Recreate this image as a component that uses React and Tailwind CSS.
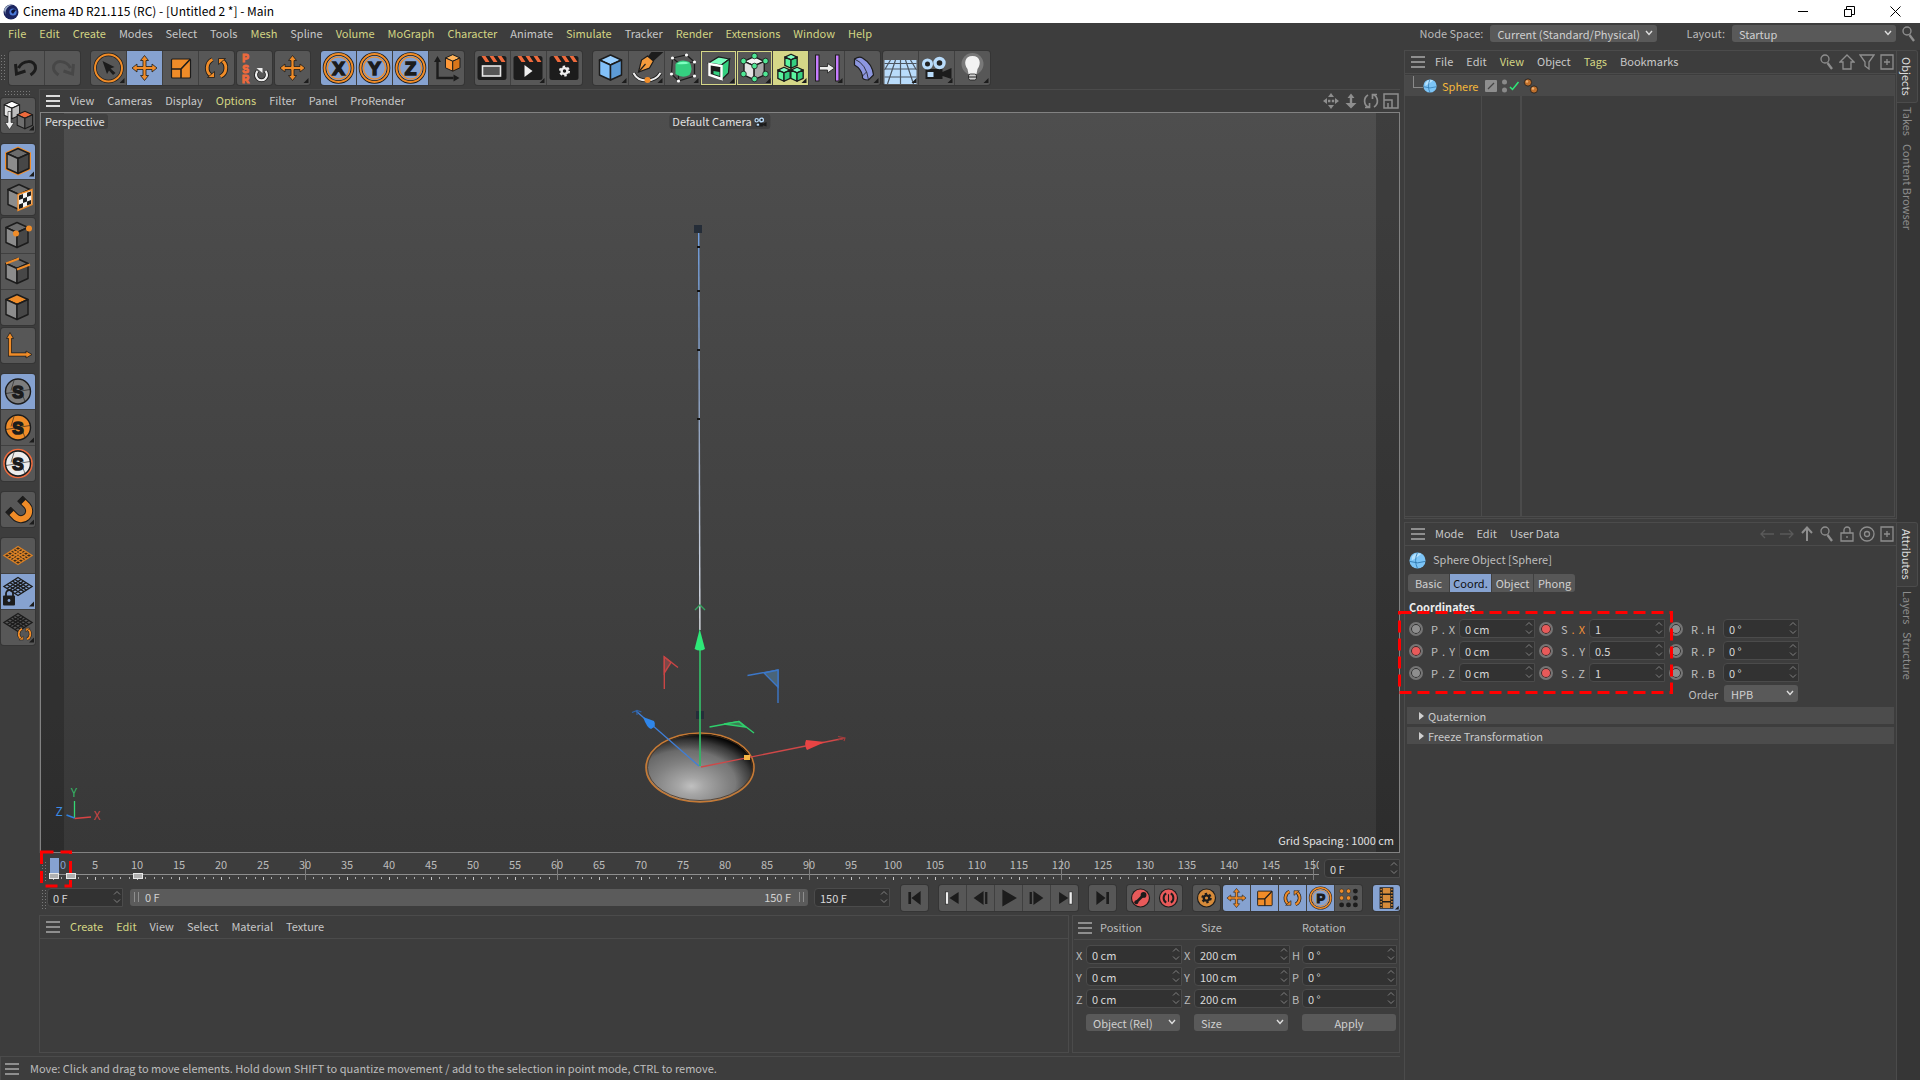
import React from 'react';

const INK = '#1c1c1c';
const ORANGE = '#f08c28';

/* ---------- small drawing helpers ---------- */

function Cube({ top, left, right, stroke = INK, width = 1.5, transform }) {
  return (
    <g transform={transform} stroke={stroke} strokeWidth={width} strokeLinejoin="round">
      <polygon points="17,4 28,9 17,14 6,9" fill={top} />
      <polygon points="6,9 17,14 17,29 6,24" fill={left} />
      <polygon points="28,9 17,14 17,29 28,24" fill={right} />
    </g>
  );
}

function Gear({ cx, cy, color, scale = 1 }) {
  return (
    <g transform={`translate(${cx} ${cy}) scale(${scale})`} fill="none" stroke={color}>
      <circle r="3.4" strokeWidth="2.8" />
      <circle r="5.2" strokeWidth="2.6" strokeDasharray="2.8 2.65" />
    </g>
  );
}

function Corner() {
  return <polygon points="33,27 33,32 28,32" fill={INK} />;
}

function Letter({ x = 17, y = 24, size = 19, weight = 1.6, fill = INK, children }) {
  return (
    <text
      x={x}
      y={y}
      fontSize={size}
      textAnchor="middle"
      fill={fill}
      stroke={fill}
      strokeWidth={weight}
      className="font-['Liberation_Sans',sans-serif] font-bold"
    >
      {children}
    </text>
  );
}

function MoveCross({ color = ORANGE }) {
  return (
    <g stroke={INK} strokeLinejoin="round">
      <path
        d="M17 4.5 L21 9.5 H18.5 V15.5 H24.5 V13 L29.5 17 L24.5 21 V18.5 H18.5 V24.5 H21 L17 29.5 L13 24.5 H15.5 V18.5 H9.5 V21 L4.5 17 L9.5 13 V15.5 H15.5 V9.5 H13 Z"
        fill={color}
        strokeWidth="0.8"
      />
    </g>
  );
}

function ScaleBox() {
  return (
    <g stroke={INK} strokeWidth="1.2">
      <rect x="8" y="8" width="19" height="19" rx="1" fill={ORANGE} />
      <path d="M8 18 H17.5 V27 M17.5 18 L27 8" fill="none" strokeWidth="1.6" />
    </g>
  );
}

function RotateRing({ color = ORANGE, outline = INK }) {
  return (
    <g fill="none">
      <g stroke={outline} strokeWidth="4.6">
        <path d="M12 25 A 9.5 9.5 0 0 1 13 8.5" />
        <path d="M22 9 A 9.5 9.5 0 0 1 21 25.5" />
      </g>
      <g stroke={color} strokeWidth="2.8">
        <path d="M12 25 A 9.5 9.5 0 0 1 13 8.5" />
        <path d="M22 9 A 9.5 9.5 0 0 1 21 25.5" />
      </g>
      <path d="M8 26.5 H15 V20.5 Z M26 7.5 H19 V13.5 Z" fill={color} stroke={outline} strokeWidth="0.8" />
    </g>
  );
}

function AxisRing({ letter }) {
  return (
    <>
      <circle cx="17" cy="17" r="14" fill="none" stroke={INK} strokeWidth="3.6" />
      <circle cx="17" cy="17" r="14" fill="none" stroke={ORANGE} strokeWidth="2" />
      <circle cx="17" cy="17" r="11" fill="none" stroke={ORANGE} strokeWidth="1.2" />
      <Letter>{letter}</Letter>
    </>
  );
}

function Clapper({ children }) {
  return (
    <>
      <rect x="2" y="5" width="29" height="24" rx="2.5" fill={INK} />
      <path d="M6 5 h4 l4 6 h-4 Z M14 5 h4 l4 6 h-4 Z M22 5 h4 l4 6 h-4 Z" fill="#ee6a3c" />
      {children}
    </>
  );
}

function GridPlane({ color }) {
  return (
    <g fill="none" stroke={color} strokeWidth="1.4">
      <path d="M17 6 L31 15 L17 24 L3 15 Z" />
      <path d="M20 8 L6 17 M22.5 9.6 L8.5 18.6 M25 11.2 L11 20.2 M28 13 L14 22" />
      <path d="M14 8 L28 17 M11.5 9.6 L25.5 18.6 M9 11.2 L23 20.2 M6 13 L20 22" />
    </g>
  );
}

function SnapDisc({ fill, ring }) {
  return (
    <>
      {ring && <circle cx="17" cy="17" r="14" fill="none" stroke={ring} strokeWidth="1.6" />}
      <circle cx="17" cy="17" r="12.5" fill={fill} stroke={INK} strokeWidth="1.4" />
      <path d="M5 19 L29 15 M13 6 L10 16 M24 27 L21 19" stroke={INK} strokeWidth="0.6" />
      <Letter y={23} size={17}>S</Letter>
    </>
  );
}

function Movie() {
  return (
    <g>
      <path d="M6 18 H23 V21 L32 17 V28 L23 25 V28 H6 Z" fill={INK} />
      <rect x="8" y="21" width="6" height="5" fill="#b9dcfb" />
      <circle cx="8" cy="13" r="4" fill="#222" stroke="#b9dcfb" strokeWidth="3" />
      <circle cx="20" cy="12" r="4.5" fill="#222" stroke="#b9dcfb" strokeWidth="3.4" />
    </g>
  );
}

const GREY_CUBE = { top: '#6b6b6b', left: '#8c8c8c', right: '#474747' };
const GREEN_CUBE = { top: '#7dffc0', left: '#5cf5a0', right: '#35cf80' };

/* ---------- toolbar contents ---------- */

const mainTools = [
  {
    gap: false,
    items: [
      { label: 'Undo', icon: <path d="M9 17 C13 9 26 8 26 17 C26 20 24 22 21 24 M6 13 L7 23 L16 20" fill="none" stroke={INK} strokeWidth="3" /> },
      { label: 'Redo', icon: <path d="M25 17 C21 9 8 8 8 17 C8 20 10 22 13 24 M28 13 L27 23 L18 20" fill="none" stroke="#474747" strokeWidth="3" /> },
    ],
  },
  {
    gap: true,
    items: [
      {
        label: 'Live Selection',
        icon: (
          <>
            <circle cx="17" cy="17" r="13.5" fill="none" stroke={INK} strokeWidth="3.4" />
            <circle cx="17" cy="17" r="13.5" fill="none" stroke={ORANGE} strokeWidth="2" />
            <path d="M11 10 L23 16 L19 17.5 L24 22 L21.5 24 L17.5 19.5 L15.5 23 Z" fill={INK} />
            <Corner />
          </>
        ),
      },
      { label: 'Move', active: true, icon: <MoveCross /> },
      { label: 'Scale', icon: <ScaleBox /> },
      { label: 'Rotate', icon: <RotateRing /> },
    ],
  },
  {
    gap: false,
    items: [
      {
        label: 'Reset PSR',
        icon: (
          <>
            <Letter x={8} y={11} size={10} weight={1} fill="#ee6a3c">P</Letter>
            <Letter x={8} y={21.5} size={10} weight={1} fill="#ee6a3c">S</Letter>
            <Letter x={8} y={32} size={10} weight={1} fill="#ee6a3c">R</Letter>
            <path d="M20 20 A5.5 5.5 0 1 0 28 20" fill="none" stroke={INK} strokeWidth="3.8" />
            <path d="M20 20 A5.5 5.5 0 1 0 28 20" fill="none" stroke="#eee" strokeWidth="2.2" />
            <path d="M19 17 H25 V22 Z" fill="#eee" />
          </>
        ),
      },
    ],
  },
  { gap: false, items: [{ label: 'Last Tool', icon: <><MoveCross /><Corner /></> }] },
  {
    gap: true,
    items: [
      { label: 'Lock X axis', active: true, icon: <AxisRing letter="X" /> },
      { label: 'Lock Y axis', active: true, icon: <AxisRing letter="Y" /> },
      { label: 'Lock Z axis', active: true, icon: <AxisRing letter="Z" /> },
      {
        label: 'Coordinate System',
        icon: (
          <>
            <path d="M8 10 V27 H24" fill="none" stroke={INK} strokeWidth="2.4" />
            <path d="M8 5 L11.5 11 H4.5 Z M30 27 L24 23.5 V30.5 Z" fill={INK} />
            <Cube transform="translate(12 1) scale(.66)" top="#ffb35a" left="#ff9838" right="#d9751a" />
          </>
        ),
      },
    ],
  },
  {
    gap: true,
    items: [
      { label: 'Render View', icon: <Clapper><rect x="7" y="15" width="18" height="10" fill="#555" stroke="#e8e8e8" strokeWidth="1.6" /></Clapper> },
      { label: 'Render to Picture Viewer', icon: <><Clapper><polygon points="13,14 21,20 13,26" fill="#eee" /></Clapper><Corner /></> },
      { label: 'Render Settings', icon: <Clapper><Gear cx={17} cy={20} color="#eee" scale={0.85} /></Clapper> },
    ],
  },
  {
    gap: true,
    items: [
      { label: 'Cube', icon: <><Cube top="#9ad0ff" left="#82c0f8" right="#5d9bd6" /><Corner /></> },
      {
        label: 'Pen',
        icon: (
          <>
            <path d="M18 6 L22 1 H34 L24 10 Z" fill={INK} />
            <path d="M18 5 L24 10 L20 17 L9 21 L12 9 Z" fill="#f59b3c" stroke={INK} strokeWidth="1.2" />
            <path d="M9 21 L16 13" stroke={INK} strokeWidth="1.2" />
            <path d="M4 22 C9 32 25 32 31 22" fill="none" stroke={INK} strokeWidth="3.6" />
            <path d="M4 22 C9 32 25 32 31 22" fill="none" stroke="#eee" strokeWidth="2" />
            <circle cx="18" cy="29" r="3" fill={ORANGE} />
            <Corner />
          </>
        ),
      },
      {
        label: 'Subdivision Surface',
        icon: (
          <>
            <path d="M7 7 L21 4 L29 11 L29 25 L13 30 L6 23 Z M7 7 L13 12 L29 11 M13 12 V30" fill="none" stroke={INK} strokeWidth="1.2" />
            <path d="M10 13 Q15 7 24 11 Q28 18 24 24 Q17 28 10 23 Z" fill="#35cf80" />
            <path d="M11 13 Q16 9 24 12 Q20 14 11 13 Z" fill="#7dffc0" />
            <g fill="#fff">
              <circle cx="7" cy="7" r="1.6" /><circle cx="21" cy="4" r="1.6" /><circle cx="29" cy="11" r="1.6" />
              <circle cx="29" cy="25" r="1.6" /><circle cx="13" cy="30" r="1.6" /><circle cx="6" cy="23" r="1.6" />
            </g>
            <Corner />
          </>
        ),
      },
      {
        label: 'Extrude',
        outline: true,
        icon: (
          <>
            <polygon points="7,12 17,6 28,8 20,14" fill="#7dffc0" stroke={INK} strokeWidth="1.2" />
            <polygon points="20,14 28,8 27,22 20,29" fill="#35cf80" stroke={INK} strokeWidth="1.2" />
            <polygon points="8,13 20,15 20,28 8,24" fill={INK} stroke="#fff" strokeWidth="2.4" />
            <polygon points="12,20 18,21 18,25 12,23" fill="#35cf80" />
            <Corner />
          </>
        ),
      },
      {
        label: 'Cloner Cage',
        outline: true,
        icon: (
          <>
            <Cube transform="translate(1 2) scale(.92)" top="#f2f2f2" left="#e2e2e2" right="#a8a8a8" />
            <g fill="#4fe895" stroke={INK} strokeWidth="0.8">
              <circle cx="17" cy="5" r="2.8" /><circle cx="6" cy="10" r="2.8" /><circle cx="28" cy="10" r="2.8" />
              <circle cx="17" cy="15" r="2.8" /><circle cx="6" cy="23" r="2.8" /><circle cx="28" cy="23" r="2.8" />
              <circle cx="17" cy="28" r="2.8" />
            </g>
            <Corner />
          </>
        ),
      },
      {
        label: 'Cloner',
        yellow: true,
        icon: (
          <>
            <Cube transform="translate(8 1) scale(.56)" width={2.4} {...GREEN_CUBE} />
            <Cube transform="translate(1 14) scale(.56)" width={2.4} {...GREEN_CUBE} />
            <Cube transform="translate(14 14) scale(.56)" width={2.4} {...GREEN_CUBE} />
            <Corner />
          </>
        ),
      },
      {
        label: 'Linear Field',
        icon: (
          <>
            <rect x="6" y="4" width="3.5" height="26" fill="#c77dff" stroke={INK} />
            <rect x="26" y="4" width="3.5" height="26" fill="#c77dff" stroke={INK} />
            <path d="M10 15.5 H18 V12.5 L25 17 L18 22 V19 H10 Z" fill="#eee" stroke={INK} strokeWidth="0.8" />
            <Corner />
          </>
        ),
      },
      {
        label: 'Bend',
        icon: (
          <>
            <path d="M9 8 Q14 5 17 7 Q27 13 28 24 L23 29 Q16 29 17 25 Q16 18 9 14 Z" fill="#8d97e0" stroke={INK} strokeWidth="1.2" />
            <path d="M9 8 Q21 13 23 29 M17 25 L21 21" fill="none" stroke={INK} strokeWidth="0.8" />
            <Corner />
          </>
        ),
      },
    ],
  },
  {
    gap: false,
    items: [
      {
        label: 'Floor',
        icon: (
          <>
            <rect x="1" y="9" width="32" height="24" fill="#b9dcfb" />
            <path d="M1 12.5 H33 M1 18 H33 M1 26 H33 M17 9 V33 M12 9 L4 33 M22 9 L30 33 M7 9 L1 19 M27 9 L33 19" stroke="#4c5560" strokeWidth="1.2" />
            <Corner />
          </>
        ),
      },
      { label: 'Camera', icon: <><Movie /><Corner /></> },
      {
        label: 'Light',
        icon: (
          <>
            <circle cx="17" cy="13" r="11" fill="#9a9a9a" opacity=".5" />
            <path d="M17 5 C9 5 8 13 12 18 L13 23 H21 L22 18 C26 13 25 5 17 5 Z" fill="#f2f2f2" />
            <rect x="13" y="23" width="8" height="6" rx="2" fill="#cfcfcf" stroke={INK} strokeWidth="0.8" />
            <path d="M13 26 H21" stroke={INK} />
            <Corner />
          </>
        ),
      },
    ],
  },
];

const sideTools = [
  {
    gap: false,
    items: [
      {
        label: 'Make Editable',
        icon: (
          <>
            <Cube transform="translate(-1 0) scale(.7)" top="#fff" left="#e4e4e4" right="#bdbdbd" />
            <Cube transform="translate(12 10) scale(.7)" top="#ee6a3c" left="#6f6f6f" right="#555" />
            <path d="M7 13 H10 V24 H13 L8.5 31 L4 24 H7 Z" fill="#eee" stroke={INK} strokeWidth="0.6" />
            <Corner />
          </>
        ),
      },
    ],
  },
  {
    gap: true,
    items: [
      {
        label: 'Model',
        active: true,
        icon: (
          <>
            <polygon points="17,2 30,8 30,25 17,31 4,25 4,8" fill={ORANGE} />
            <Cube {...GREY_CUBE} />
            <Corner />
          </>
        ),
      },
      {
        label: 'Texture',
        icon: (
          <>
            <Cube transform="translate(1 0)" {...GREY_CUBE} />
            <polygon points="17,14 31,9 31,24 17,30" fill="#f4f4f4" stroke={ORANGE} strokeWidth="1.4" />
            <path d="M18 15 L22 13.6 V18 L18 19.6 Z M26 12.2 L30 10.8 V15 L26 16.6 Z M22 18 L26 16.6 V21 L22 22.6 Z M18 24 L22 22.6 V27 L18 28.4 Z M26 21 L30 19.4 V23.6 L26 25 Z" fill={INK} />
          </>
        ),
      },
    ],
  },
  {
    gap: false,
    items: [
      { label: 'Points', icon: <><Cube transform="translate(-1 0)" {...GREY_CUBE} /><circle cx="15" cy="15" r="3" fill={ORANGE} /><circle cx="28" cy="10" r="3" fill={ORANGE} /></> },
      { label: 'Edges', icon: <><Cube transform="translate(-1 0)" {...GREY_CUBE} /><path d="M5 9 L18 4 M16 15 L29 10" stroke={ORANGE} strokeWidth="2" /></> },
      { label: 'Polygons', icon: <Cube transform="translate(-1 0)" {...GREY_CUBE} top={ORANGE} /> },
    ],
  },
  {
    gap: false,
    items: [
      {
        label: 'Enable Axis',
        icon: (
          <>
            <path d="M9 9 V26 H26" fill="none" stroke={INK} strokeWidth="4" />
            <path d="M9 4 L12.5 10 H5.5 Z M31 26 L25 22.5 V29.5 Z" fill={ORANGE} stroke={INK} strokeWidth="0.8" />
            <path d="M9 9 V26 H26" fill="none" stroke={ORANGE} strokeWidth="2.4" />
          </>
        ),
      },
    ],
  },
  {
    gap: true,
    items: [
      { label: 'Viewport Solo Off', active: true, icon: <SnapDisc fill="#7d7d7d" /> },
      { label: 'Viewport Solo Single', icon: <><SnapDisc fill={ORANGE} /><Corner /></> },
      { label: 'Viewport Solo Selection', icon: <SnapDisc fill="#ececec" ring="#ee6a3c" /> },
    ],
  },
  {
    gap: true,
    items: [
      {
        label: 'Enable Snap',
        icon: (
          <>
            <path d="M7 17 L14 24 A8 8 0 0 0 26 13 L19 6" fill="none" stroke={INK} strokeWidth="8" />
            <path d="M8 18 L14 24 A8 8 0 0 0 26 13 L20 7" fill="none" stroke={ORANGE} strokeWidth="6" />
            <path d="M7 17 L10.5 20.5 M19 6 L22.5 9.5" stroke={INK} strokeWidth="7" />
            <Corner />
          </>
        ),
      },
    ],
  },
  {
    gap: true,
    items: [
      {
        label: 'Workplane',
        icon: (
          <g transform="translate(0 2)">
            <path d="M17 6 L31 15 L17 24 L3 15 Z" fill="#3a2a1a" />
            <GridPlane color="#d98025" />
          </g>
        ),
      },
      {
        label: 'Lock Workplane',
        active: true,
        icon: (
          <>
            <g transform="translate(0 -3)"><GridPlane color={INK} /></g>
            <path d="M5 22 V19 A3.5 3.5 0 0 1 12 19 V22" fill="none" stroke={INK} strokeWidth="1.8" />
            <rect x="2" y="21" width="12" height="10" rx="1" fill={INK} />
            <circle cx="8" cy="26" r="1.4" fill="#86a2d0" />
            <Corner />
          </>
        ),
      },
      {
        label: 'Planar Workplane',
        icon: (
          <>
            <g transform="translate(0 -3)"><GridPlane color={INK} /></g>
            <g transform="translate(13 13) scale(.62)"><RotateRing /></g>
            <Corner />
          </>
        ),
      },
    ],
  },
];

const redDisc = (
  <>
    <circle cx="17" cy="17" r="12.5" fill={INK} />
    <circle cx="17" cy="17" r="11" fill="#e85a5a" />
  </>
);

const transport = [
  { gap: true, items: [{ label: 'Go to Start', icon: <path d="M9 9 H12.5 V25 H9 Z M25 8 V26 L13 17 Z" fill={INK} /> }] },
  {
    gap: true,
    items: [
      { label: 'Previous Key', icon: <><rect x="8" y="9" width="4" height="16" fill="#eee" stroke={INK} strokeWidth="0.8" /><path d="M25 9 V25 L13 17 Z" fill={INK} /></> },
      { label: 'Previous Frame', icon: <path d="M21 8 V26 L8 17 Z M23 9 H26 V25 H23 Z" fill={INK} /> },
      { label: 'Play', icon: <path d="M9 6 L28 17 L9 28 Z" fill={INK} /> },
      { label: 'Next Frame', icon: <path d="M13 8 V26 L26 17 Z M8 9 H11 V25 H8 Z" fill={INK} /> },
      { label: 'Next Key', icon: <><path d="M10 9 V25 L22 17 Z" fill={INK} /><rect x="23" y="9" width="4" height="16" fill="#eee" stroke={INK} strokeWidth="0.8" /></> },
    ],
  },
  { gap: true, items: [{ label: 'Go to End', icon: <path d="M22 9 H25.5 V25 H22 Z M9 8 V26 L21 17 Z" fill={INK} /> }] },
  {
    gap: true,
    items: [
      { label: 'Record', icon: <>{redDisc}<path d="M11 23 L20 14" stroke={INK} strokeWidth="3.4" /><circle cx="21" cy="13" r="3.8" fill={INK} /><circle cx="11.5" cy="22.5" r="2.6" fill={INK} /></> },
      { label: 'Autokeying', icon: <>{redDisc}<path d="M14 11 A7 7 0 0 0 14 23 M20 11 A7 7 0 0 1 20 23" fill="none" stroke={INK} strokeWidth="2.6" /><path d="M17 12 V22" stroke={INK} strokeWidth="1.4" /></> },
    ],
  },
  {
    gap: true,
    items: [
      { label: 'Keyframe Selection', icon: <><circle cx="17" cy="17" r="12.5" fill={INK} /><circle cx="17" cy="17" r="11" fill="#d68b3a" /><Gear cx={17} cy={17} color={INK} scale={1.05} /></> },
    ],
  },
  {
    gap: false,
    items: [
      { label: 'Key Position', active: true, icon: <MoveCross /> },
      { label: 'Key Scale', active: true, icon: <ScaleBox /> },
      { label: 'Key Rotation', active: true, icon: <RotateRing /> },
      {
        label: 'Key Parameter',
        active: true,
        icon: (
          <>
            <circle cx="17" cy="17" r="13.5" fill="none" stroke={INK} strokeWidth="3.4" />
            <circle cx="17" cy="17" r="13.5" fill="none" stroke={ORANGE} strokeWidth="2" />
            <circle cx="17" cy="17" r="10.5" fill="none" stroke={ORANGE} />
            <Letter x={17.5} y={23} size={17}>P</Letter>
          </>
        ),
      },
      {
        label: 'Key Point Level Animation',
        icon: (
          <>
            <g fill={ORANGE} stroke={INK} strokeWidth="0.6">
              <circle cx="8" cy="8" r="2.8" /><circle cx="17" cy="8" r="2.8" /><circle cx="8" cy="17" r="2.8" /><circle cx="17" cy="17" r="2.8" />
            </g>
            <g fill={INK}>
              <circle cx="26" cy="8" r="3.2" /><circle cx="26" cy="17" r="3.2" /><circle cx="8" cy="26" r="3.2" /><circle cx="17" cy="26" r="3.2" /><circle cx="26" cy="26" r="3.2" />
            </g>
          </>
        ),
      },
    ],
  },
  {
    gap: true,
    items: [
      {
        label: 'Timeline',
        active: true,
        icon: (
          <>
            <rect x="8" y="3" width="18" height="28" fill={INK} />
            <path d="M12 4 H22 V11 H12 Z M12 13 H22 V21 H12 Z M12 23 H22 V30 H12 Z" fill="#d68b3a" />
            <path d="M10 5 V30 M24 5 V30" stroke="#d68b3a" strokeWidth="2" strokeDasharray="2 2" />
            <Corner />
          </>
        ),
      },
    ],
  },
];

/* ---------- shared controls ---------- */

function ToolGroup({ items, size, vertical }) {
  return (
    <div
      className={`flex shrink-0 gap-px overflow-hidden rounded-[3px] bg-[#404040] ring-1 ring-[#353535] ${vertical ? 'flex-col' : ''}`}
    >
      {items.map((t) => (
        <button
          key={t.label}
          type="button"
          aria-label={t.label}
          className={`${size} flex shrink-0 items-center justify-center ${
            t.active ? 'bg-[#86a2d0]' : t.yellow ? 'bg-[#d5d788]' : 'bg-[#575757]'
          } ${t.outline ? 'ring-1 ring-inset ring-[#d5d788]' : ''}`}
        >
          <svg viewBox="0 0 34 34" className="h-full w-full">{t.icon}</svg>
        </button>
      ))}
    </div>
  );
}

function Burger({ light }) {
  return (
    <button type="button" aria-label="Menu" className="flex w-3.5 shrink-0 flex-col gap-[3px]">
      {[0, 1, 2].map((i) => (
        <span key={i} className={`block h-0.5 w-full ${light ? 'bg-[#dcdcdc]' : 'bg-[#8e8e8e]'}`} />
      ))}
    </button>
  );
}

function Menu({ items }) {
  return (
    <nav className="flex items-center gap-[13px] pb-0.5">
      {items.map(([label, hot]) => (
        <button key={label} type="button" className={hot ? 'text-[#d3d583]' : 'text-[#c8c8c8]'}>
          {label}
        </button>
      ))}
    </nav>
  );
}

function Field({ label, value, width = 'w-[76px]' }) {
  return (
    <div className={`relative shrink-0 ${width}`}>
      <input
        type="text"
        aria-label={label}
        defaultValue={value}
        className="block h-[19px] w-full rounded-l border border-[#4b4b4b] bg-[#323232] pl-[5px] text-[#d8d8d8] outline-none"
      />
      <svg viewBox="0 0 8 14" className="pointer-events-none absolute top-0.5 right-0.5 h-3.5 w-2" fill="none" stroke="#808080">
        <path d="M1 4.5 L4 1.5 L7 4.5 M1 9.5 L4 12.5 L7 9.5" />
      </svg>
    </div>
  );
}

function Select({ id, label, value, width }) {
  return (
    <div className={`relative shrink-0 ${width}`}>
      <select
        id={id}
        aria-label={label}
        defaultValue={value}
        className="block h-[17px] w-full appearance-none rounded-[3px] bg-[#595959] pl-[7px] text-[#d0d0d0] outline-none"
      >
        <option>{value}</option>
      </select>
      <svg viewBox="0 0 8 6" className="pointer-events-none absolute top-[5px] right-1 h-1.5 w-2" fill="none" stroke="#dedede" strokeWidth="1.4">
        <path d="M1 1 L4 4.5 L7 1" />
      </svg>
    </div>
  );
}

function Grip({ className = '' }) {
  return (
    <div
      className={`shrink-0 bg-[radial-gradient(circle,#7a7a7a_0.7px,transparent_1px)] bg-[size:3px_3px] ${className}`}
    />
  );
}

function SphereIcon({ className }) {
  return (
    <svg viewBox="0 0 18 18" className={className}>
      <circle cx="9" cy="9" r="8.5" fill="#7cc4f6" />
      <path d="M3 5 A8 8 0 0 1 13 2 Q8 6 3 9 Z" fill="#b5e2ff" />
      <path d="M1 10 Q9 13 17 10 M9 0.5 Q5 9 9 17.5" fill="none" stroke="#2c76ae" strokeWidth="0.9" />
    </svg>
  );
}

/* ---------- title and menu bar ---------- */

function TitleBar() {
  return (
    <header className="flex h-[23px] items-center bg-white text-black">
      <svg viewBox="0 0 16 16" className="ml-[3px] h-4 w-4">
        <circle cx="8" cy="8" r="7.5" fill="#1c2560" />
        <path d="M1 6 A7.5 7.5 0 0 1 10 1 A8 8 0 0 0 3 12 Z" fill="#9fb0c8" />
        <circle cx="10" cy="8" r="3.6" fill="#4a78d8" />
        <path d="M8 8 A3 3 0 0 1 13 6 L10 10 Z" fill="#0c1236" />
      </svg>
      <h1 className="ml-1 pb-0.5 text-[12px]">Cinema 4D R21.115 (RC) - [Untitled 2 *] - Main</h1>
      <div className="mr-0.5 ml-auto flex">
        <button type="button" aria-label="Minimize" className="flex w-[46px] justify-center">
          <svg viewBox="0 0 10 10" className="h-2.5 w-2.5" stroke="#000"><path d="M0 5.5 H10" /></svg>
        </button>
        <button type="button" aria-label="Restore" className="flex w-[46px] justify-center">
          <svg viewBox="0 0 11 11" className="h-[11px] w-[11px]" fill="none" stroke="#000">
            <path d="M0.5 3.5 H7.5 V10.5 H0.5 Z M2.5 3 V0.5 H10.5 V8.5 H8" />
          </svg>
        </button>
        <button type="button" aria-label="Close" className="flex w-[46px] justify-center">
          <svg viewBox="0 0 11 11" className="h-[11px] w-[11px]" stroke="#000"><path d="M0.5 0.5 L10.5 10.5 M10.5 0.5 L0.5 10.5" /></svg>
        </button>
      </div>
    </header>
  );
}

const mainMenu = [
  ['File', 1], ['Edit', 1], ['Create', 1], ['Modes', 0], ['Select', 0], ['Tools', 0], ['Mesh', 1], ['Spline', 0],
  ['Volume', 1], ['MoGraph', 1], ['Character', 1], ['Animate', 0], ['Simulate', 1], ['Tracker', 0], ['Render', 1],
  ['Extensions', 1], ['Window', 1], ['Help', 1],
];

function MenuBar() {
  return (
    <div className="flex h-[22px] items-center pb-px pl-2">
      <Menu items={mainMenu} />
      <div className="ml-auto flex items-center">
        <label htmlFor="node-space" className="mr-[7px] pb-0.5 text-[#bababa]">Node Space:</label>
        <Select id="node-space" value="Current (Standard/Physical)" width="w-[167px]" />
        <label htmlFor="layout" className="mr-[7px] ml-[29px] pb-0.5 text-[#bababa]">Layout:</label>
        <Select id="layout" value="Startup" width="w-[164px]" />
        <button type="button" aria-label="Search" className="mr-1 ml-1.5">
          <svg viewBox="0 0 14 16" className="h-4 w-3.5" fill="none" stroke="#8e8e8e">
            <circle cx="5" cy="5" r="4" strokeWidth="1.4" />
            <path d="M7.5 9 L12 15" strokeWidth="2.4" />
          </svg>
        </button>
      </div>
    </div>
  );
}

/* ---------- viewport ---------- */

function Scene() {
  return (
    <svg viewBox="41 113 1358 739" preserveAspectRatio="xMidYMid slice" className="absolute inset-0 h-full w-full">
      <defs>
        <radialGradient id="ball" cx="0.42" cy="0.77" r="0.8">
          <stop offset="0" stopColor="#c0c0c0" />
          <stop offset="0.15" stopColor="#a6a6a6" />
          <stop offset="0.45" stopColor="#808080" />
          <stop offset="1" stopColor="#484848" />
        </radialGradient>
        <radialGradient id="ballShade" cx="0.36" cy="0.72" r="0.72">
          <stop offset="0.65" stopColor="#000" stopOpacity="0" />
          <stop offset="0.85" stopColor="#000" stopOpacity="0.4" />
          <stop offset="1" stopColor="#000" stopOpacity="0.92" />
        </radialGradient>
        <linearGradient id="path" x1="0" y1="0" x2="0" y2="1">
          <stop offset="0" stopColor="#6f9ee0" />
          <stop offset="0.5" stopColor="#93a4bf" />
          <stop offset="1" stopColor="#dfe3ea" />
        </linearGradient>
      </defs>

      {/* animation path with its frame marks */}
      <path d="M698 232 h1.4 L700.6 630 h-1.4 Z" fill="url(#path)" />
      <rect x="694" y="225" width="8" height="8" fill="#252d38" />
      {[247, 291, 350, 419].map((y) => (
        <rect key={y} x="697" y={y - 1} width="3" height="2" fill="#111" />
      ))}

      <ellipse cx="700" cy="767.5" rx="54" ry="34.5" fill="url(#ball)" />
      <ellipse cx="700" cy="767.5" rx="54" ry="34.5" fill="url(#ballShade)" stroke="#c77a34" strokeWidth="1.6" />
      <ellipse cx="700" cy="767.5" rx="52.5" ry="33" fill="none" stroke="#4a3420" strokeWidth="0.8" />

      {/* move gizmo */}
      <path d="M695 610 L700 605 L705 610" fill="none" stroke="#35a35f" strokeWidth="1.4" />
      <rect x="696" y="711" width="8" height="8" fill="#252d38" />
      <path d="M700 648 V766" stroke="#35b566" strokeWidth="1.8" />
      <path d="M699.7 629 L705 649 Q700 652 694.6 649 Z" fill="#2ee878" />
      <path d="M699 766 L636 711" stroke="#3f7fd8" strokeWidth="1.3" />
      <path d="M632 712.5 L637 710.5 L641.5 712 M637 710.5 L637 715" fill="none" stroke="#2f63a8" strokeWidth="1.2" />
      <path d="M643 717 L654 721 Q657 726 651 729 Q647 728 643 717 Z" fill="#2f86ea" />
      <path d="M701 767 L843 738.5" stroke="#cf4848" strokeWidth="1.3" />
      <path d="M838 736.5 L845 738 L844 741 M838 740 L845 738" fill="none" stroke="#a03c3c" strokeWidth="1.2" />
      <path d="M825 742 L806 740 Q804 745 807 750 Z" fill="#e84444" />
      <rect x="744" y="755" width="6" height="5" fill="#f6b545" />

      {/* plane handles */}
      <g fill="none" stroke="#c94545" strokeWidth="1.4">
        <path d="M664.3 689 V657 L678 667.5" />
        <path d="M664.3 657 L671 662.5 L664.3 673 Z" fill="#7a4848" />
      </g>
      <g fill="none" stroke="#3c77c8" strokeWidth="1.4">
        <path d="M778 703 V670 L747.5 675.5" />
        <path d="M778 670 L764 673 L778 687 Z" fill="#4a6478" />
      </g>
      <g fill="none" stroke="#2fcf6c" strokeWidth="1.4">
        <path d="M709.5 727 L739 721.5 L754 733" />
        <path d="M724 724 L739 721.5 L745 727 Z" fill="#3f7a54" />
      </g>

      {/* world axis */}
      <path d="M74.5 801 V818" stroke="#35d673" strokeWidth="1.3" />
      <path d="M74.5 818.5 L91 817" stroke="#d84444" strokeWidth="1.3" />
      <path d="M74.5 818 L66.5 815" stroke="#2f80e0" strokeWidth="1.6" />
      <g fontSize="12" textAnchor="middle">
        <text x="74" y="797" fill="#35b566">Y</text>
        <text x="97" y="820" fill="#c94545">X</text>
        <text x="59" y="816" fill="#3c8ce8">Z</text>
      </g>
    </svg>
  );
}

const viewMenu = [['View', 0], ['Cameras', 0], ['Display', 0], ['Options', 1], ['Filter', 0], ['Panel', 0], ['ProRender', 0]];

const viewTools = [
  ['Pan', <path d="M8 0 L11 4 H5 Z M8 16 L11 12 H5 Z M0 8 L4 5 V11 Z M16 8 L12 5 V11 Z M5 6.8 h2.4 v2.4 h-2.4 Z M8.8 6.8 h2.4 v2.4 h-2.4 Z" fill="#8e8e8e" />],
  ['Dolly', <path d="M8 0.5 L11.5 5 H9.2 V10 H13.5 L8 15.5 L2.5 10 H6.8 V5 H4.5 Z" fill="#8e8e8e" />],
  ['Orbit', <path d="M6 14.5 A7 7 0 0 1 5 2 M10 1.5 A7 7 0 0 1 11 14 M2 14.5 H6.5 V10 M14 1.5 H9.5 V6" fill="none" stroke="#8e8e8e" strokeWidth="1.7" />],
  ['Toggle View', <path d="M1 1 H15 V15 H1 Z M1 7 H9 V15 M5 10 V15" fill="none" stroke="#8e8e8e" strokeWidth="1.5" />],
];

function Viewport() {
  return (
    <section className="flex min-h-0 flex-1 flex-col border-t border-l border-[#4b4b4b]">
      <div className="flex h-[22px] shrink-0 items-center gap-2.5 pr-px pl-1.5">
        <Burger light />
        <Menu items={viewMenu} />
        <div className="ml-auto flex gap-1">
          {viewTools.map(([label, icon]) => (
            <button key={label} type="button" aria-label={label}>
              <svg viewBox="0 0 16 16" className="h-4 w-4">{icon}</svg>
            </button>
          ))}
        </div>
      </div>
      <div className="relative flex-1 overflow-hidden border border-[#828282] bg-linear-to-b from-[#4e4e4e] to-[#383838]">
        <div className="absolute inset-y-0 left-0 w-[23px] bg-black/20" />
        <div className="absolute inset-y-0 right-0 w-[23px] bg-black/20" />
        <Scene />
        <div className="absolute top-px left-px rounded-[3px] bg-[#404040] px-[3px] leading-[15px] text-[#e0e0e0]">Perspective</div>
        <div className="absolute top-px left-1/2 flex -translate-x-1/2 items-center rounded-[3px] bg-[#404040] px-[3px] leading-[15px] text-[#e0e0e0]">
          Default Camera
          <svg viewBox="0 3 34 28" className="ml-0.5 h-3 w-3.5"><Movie /></svg>
        </div>
        <div className="absolute right-px bottom-1 rounded-[3px] px-1 text-[#e0e0e0]">Grid Spacing : 1000 cm</div>
      </div>
    </section>
  );
}

/* ---------- timeline ---------- */

const LAST_FRAME = 150;
const frames = Array.from({ length: LAST_FRAME + 1 }, (_, i) => i);
const keys = [0, 2, 10];

function Timeline() {
  const at = (f) => ({ left: `${(f / LAST_FRAME) * 100}%` });
  return (
    <div className="relative flex h-8 shrink-0 items-start">
      <Grip className="mt-2 ml-0.5 h-5 w-[6px]" />
      <div className="h-7 min-w-0 flex-1 overflow-hidden pr-1.5 pl-1.5">
        <div className="relative h-full">
          <div className="absolute top-[21px] -right-1.5 -left-1 h-px bg-[#8e8e8e]" />
          <div className="absolute top-[5px] -left-[3px] h-4 w-[9px] bg-[#86a2d0]" />
          {frames.map((f) => (
            <div
              key={f}
              style={at(f)}
              className={`absolute w-px ${f % 30 === 0 && f > 0 ? 'top-1.5 h-[21px] bg-[#7d7d7d]' : f % 5 === 0 ? 'top-6 h-[3px] bg-[#c4c4c4]' : 'top-6 h-0.5 bg-[#a8a8a8]'}`}
            />
          ))}
          {frames.filter((f) => f % 5 === 0).map((f) => (
            <div
              key={f}
              style={at(f)}
              className={`absolute top-[3px] ${f === 0 ? 'ml-[7px] text-[#86a2d0]' : '-translate-x-1/2 text-[#bcbcbc]'}`}
            >
              {f}
            </div>
          ))}
          {keys.map((f) => (
            <div key={f} style={at(f)} className="absolute top-5 -ml-1 h-1.5 w-2.5 border border-[#e8e8e8] bg-[#b0b0b0]" />
          ))}
        </div>
      </div>
      <div className="mt-1.5 ml-[5px]">
        <Field label="Current frame" value="0 F" />
      </div>
      <svg viewBox="0 0 34 38" className="absolute -top-[3px] left-0 h-[38px] w-[34px]" fill="none" stroke="#f00" strokeWidth="3" strokeDasharray="12 7">
        <rect x="2.5" y="2" width="29" height="34" />
      </svg>
    </div>
  );
}

function PlaybackBar() {
  return (
    <div className="flex h-[30px] shrink-0 items-start">
      <Grip className="mt-1 ml-0.5 h-5 w-[6px]" />
      <div className="mt-[3px]">
        <Field label="Start frame" value="0 F" />
      </div>
      <div className="mt-1 mr-1.5 ml-[7px] flex h-[17px] flex-1 items-center justify-between rounded-[3px] bg-[#5b5b5b] px-1 text-[#d2d2d2]">
        <span className="flex items-center gap-1.5 pb-0.5">
          <span className="h-2.5 w-[5px] border-x border-[#8e8e8e]" />0 F
        </span>
        <span className="flex items-center gap-2 pb-0.5">
          150 F<span className="h-2.5 w-[5px] border-x border-[#8e8e8e]" />
        </span>
      </div>
      <div className="mt-[3px]">
        <Field label="End frame" value="150 F" />
      </div>
      {transport.map((g, i) => (
        <div key={i} className={g.gap ? 'ml-[11px]' : 'ml-[3px]'}>
          <ToolGroup items={g.items} size="h-[26px] w-[27px]" />
        </div>
      ))}
    </div>
  );
}

/* ---------- lower panels ---------- */

const materialMenu = [['Create', 1], ['Edit', 1], ['View', 0], ['Select', 0], ['Material', 0], ['Texture', 0]];

function MaterialPanel() {
  return (
    <section className="flex flex-1 flex-col border border-[#4b4b4b]">
      <div className="flex h-[23px] items-center gap-2.5 border-b border-[#4b4b4b] pl-1.5">
        <Burger />
        <Menu items={materialMenu} />
      </div>
    </section>
  );
}

const coordRows = [
  ['X', '0 cm', 'X', '200 cm', 'H', '0 °'],
  ['Y', '0 cm', 'Y', '100 cm', 'P', '0 °'],
  ['Z', '0 cm', 'Z', '200 cm', 'B', '0 °'],
];

function CoordinatePanel() {
  return (
    <section className="w-[328px] shrink-0 border border-[#4b4b4b] text-[#bababa]">
      <div className="mx-px flex h-6 items-center border-b border-[#4b4b4b] pl-1">
        <Burger />
        <h2 className="ml-2 w-[101px] pb-0.5">Position</h2>
        <h2 className="w-[101px] pb-0.5">Size</h2>
        <h2 className="pb-0.5">Rotation</h2>
      </div>
      <div className="mt-[5px] flex flex-col gap-[3px] pl-[3px]">
        {coordRows.map((r) => (
          <div key={r[0]} className="flex items-center">
            <span className="w-2.5">{r[0]}</span>
            <Field label={`Position ${r[0]}`} value={r[1]} width="w-[96px]" />
            <span className="ml-0.5 w-2.5">{r[2]}</span>
            <Field label={`Size ${r[2]}`} value={r[3]} width="w-[96px]" />
            <span className="ml-0.5 w-2.5">{r[4]}</span>
            <Field label={`Rotation ${r[4]}`} value={r[5]} width="w-[95px]" />
          </div>
        ))}
      </div>
      <div className="mt-1.5 flex gap-3.5 pl-[13px]">
        <Select label="Coordinate mode" value="Object (Rel)" width="w-[94px]" />
        <Select label="Size mode" value="Size" width="w-[94px]" />
        <button type="button" className="h-[17px] w-[94px] rounded-[3px] bg-[#595959] text-[#d0d0d0]">Apply</button>
      </div>
    </section>
  );
}

/* ---------- right column ---------- */

function SideTabs({ tabs }) {
  return (
    <div className="flex w-[23px] shrink-0 flex-col items-start">
      {tabs.map((t, i) => (
        <button
          key={t}
          type="button"
          className={`flex w-[21px] items-center justify-center [writing-mode:vertical-rl] ${
            i === 0 ? 'rounded-r-[3px] border border-l-0 border-[#4b4b4b] bg-[#3d3d3d] pt-1.5 pb-1.5 text-[#dcdcdc]' : 'pt-1 pb-1 text-[#8c8c8c]'
          }`}
        >
          {t}
        </button>
      ))}
    </div>
  );
}

function IconButton({ label, faded, children }) {
  return (
    <button type="button" aria-label={label}>
      <svg viewBox="0 0 16 16" className="h-4 w-4" fill="none" stroke={faded ? '#5a5a5a' : '#8e8e8e'} strokeWidth="1.3">
        {children}
      </svg>
    </button>
  );
}

const addPath = <path d="M2 1 H14 V15 H2 Z M8 5 V11 M5 8 H11" />;

function ObjectManager() {
  return (
    <section className="mb-[3px] flex h-[469px] shrink-0">
      <div className="flex min-w-0 flex-1 flex-col border border-[#4b4b4b] bg-[#3d3d3d]">
        <div className="flex h-[23px] shrink-0 items-center gap-2.5 border-b border-[#4b4b4b] pr-px pl-1.5">
          <Burger />
          <Menu items={[['File', 0], ['Edit', 0], ['View', 1], ['Object', 0], ['Tags', 1], ['Bookmarks', 0]]} />
          <div className="ml-auto flex gap-1">
            <IconButton label="Search objects"><circle cx="6" cy="5" r="4" /><path d="M8.5 9 L13 15" strokeWidth="2.4" /></IconButton>
            <IconButton label="Home"><path d="M8 1 L15 8 H12 V15 H4 V8 H1 Z" /></IconButton>
            <IconButton label="Filter"><path d="M1 1 H15 L10 8 V15 L6 12 V8 Z" /></IconButton>
            <IconButton label="New view">{addPath}</IconButton>
          </div>
        </div>
        <div className="mt-px mr-px mb-px flex flex-1 flex-col border-t border-r border-b border-[#4b4b4b]">
          <div className="flex h-5 items-center bg-[#494949]">
            <span className="mb-2 ml-2 h-3 w-2.5 border-b border-l border-[#8a8a8a]" />
            <SphereIcon className="h-3.5 w-3.5" />
            <span className="ml-[5px] w-[43px] text-[#f5b83a]">Sphere</span>
            <svg viewBox="0 0 12 12" className="h-3 w-3"><rect width="12" height="12" rx="1" fill="#8e8e8e" /><path d="M3 9 L9 3" stroke="#444" strokeWidth="1.2" /></svg>
            <svg viewBox="0 0 20 14" className="ml-[5px] h-3.5 w-5">
              <circle cx="2.5" cy="3" r="2.5" fill="#8a8a8a" /><circle cx="2.5" cy="11" r="2.5" fill="#8a8a8a" />
              <path d="M8 8 L10.5 10.5 L16.5 3" fill="none" stroke="#2ee878" strokeWidth="1.5" />
            </svg>
            <svg viewBox="0 0 16 16" className="ml-px h-4 w-4">
              <circle cx="5" cy="4.5" r="3.6" fill="#c0702c" stroke={INK} strokeWidth="0.8" />
              <circle cx="11" cy="11.5" r="3.6" fill="#c0702c" stroke={INK} strokeWidth="0.8" />
              <circle cx="4" cy="3.5" r="1.2" fill="#f0b070" /><circle cx="10" cy="10.5" r="1.2" fill="#f0b070" />
            </svg>
          </div>
          <div className="flex flex-1">
            <div className="w-[77px] border-r border-[#4b4b4b]" />
            <div className="w-10 border-r-2 border-[#4b4b4b]" />
          </div>
        </div>
      </div>
      <SideTabs tabs={['Objects', 'Takes', 'Content Browser']} />
    </section>
  );
}

const attrRows = [
  { p: ['X', '0 cm', false], s: ['X', '1', true], r: ['H', '0 °'] },
  { p: ['Y', '0 cm', true], s: ['Y', '0.5', true], r: ['P', '0 °'] },
  { p: ['Z', '0 cm', false], s: ['Z', '1', true], r: ['B', '0 °'] },
];

function KeyDot({ label, on }) {
  return (
    <button
      type="button"
      aria-label={`Keyframe ${label}`}
      className={`h-3.5 w-3.5 shrink-0 rounded-full border-2 border-[#757575] ring-1 ring-[#2c2c2c] ring-inset ${on ? 'bg-[#e85a5a]' : 'bg-[#8e8e8e]'}`}
    />
  );
}

function AttrCell({ group, axis, value, on, hot, space = 'mr-1' }) {
  return (
    <div className="flex items-center">
      <KeyDot label={`${group}.${axis}`} on={on} />
      <span className={`ml-2 flex w-6 justify-between ${space}`}>
        <span>{group}</span>
        <span className={hot ? 'text-[#f09038]' : ''}>.</span>
        <span className={hot ? 'text-[#f09038]' : ''}>{axis}</span>
      </span>
      <Field label={`${group}.${axis}`} value={value} />
    </div>
  );
}

function AttributeManager() {
  return (
    <section className="flex min-h-0 flex-1">
      <div className="flex min-w-0 flex-1 flex-col border-t border-r border-l border-[#4b4b4b] bg-[#3d3d3d] text-[#bebebe]">
        <div className="flex h-[23px] shrink-0 items-center gap-2.5 border-b border-[#4b4b4b] pr-px pl-1.5">
          <Burger />
          <Menu items={[['Mode', 0], ['Edit', 0], ['User Data', 0]]} />
          <div className="ml-auto flex gap-1">
            <IconButton label="Back" faded><path d="M15 8 H2 M6 4 L2 8 L6 12" /></IconButton>
            <IconButton label="Forward" faded><path d="M1 8 H14 M10 4 L14 8 L10 12" /></IconButton>
            <IconButton label="Up"><path d="M8 15 V2 M3 7 L8 1.5 L13 7" strokeWidth="2" /></IconButton>
            <IconButton label="Search attributes"><circle cx="6" cy="5" r="4" /><path d="M8.5 9 L13 15" strokeWidth="2.4" /></IconButton>
            <IconButton label="Lock"><path d="M2 7 H14 V15 H2 Z M5 7 V4 A3 3 0 0 1 11 4 V7 M8 10 V12" /></IconButton>
            <IconButton label="Target"><circle cx="8" cy="8" r="7" /><circle cx="8" cy="8" r="2.5" /></IconButton>
            <IconButton label="New attribute view">{addPath}</IconButton>
          </div>
        </div>

        <div className="flex h-7 items-center pl-1">
          <SphereIcon className="h-[17px] w-[17px]" />
          <h2 className="ml-[7px] pb-0.5">Sphere Object [Sphere]</h2>
        </div>

        <div className="ml-[3px] flex w-fit gap-px overflow-hidden rounded-[3px] bg-[#404040]">
          {['Basic', 'Coord.', 'Object', 'Phong'].map((t) => (
            <button
              key={t}
              type="button"
              className={`h-[18px] w-[41px] ${t === 'Coord.' ? 'bg-[#86a2d0] text-[#101010]' : 'bg-[#575757] text-[#d0d0d0]'}`}
            >
              {t}
            </button>
          ))}
        </div>

        <h3 className="mt-[7px] pl-1 font-bold text-[#ececec]">Coordinates</h3>

        <div className="relative mt-1 w-fit pl-1">
          <div className="flex flex-col gap-[3px]">
            {attrRows.map((row, i) => (
              <div key={i} className="flex items-center gap-1">
                <AttrCell group="P" axis={row.p[0]} value={row.p[1]} on={row.p[2]} />
                <AttrCell group="S" axis={row.s[0]} value={row.s[1]} on={row.s[2]} hot={i === 0} />
                <AttrCell group="R" axis={row.r[0]} value={row.r[1]} space="mr-2" />
              </div>
            ))}
          </div>
          <div className="mt-[3px] flex items-center justify-end pr-px">
            <label htmlFor="order" className="mr-1.5">Order</label>
            <Select id="order" value="HPB" width="w-[74px]" />
          </div>
          <svg viewBox="0 0 275 83" className="pointer-events-none absolute -top-2 -left-[7px] h-[83px] w-[275px]" fill="none" stroke="#f00" strokeWidth="3" strokeDasharray="12 6">
            <rect x="1.5" y="1.5" width="272" height="80" />
          </svg>
        </div>

        <div className="mt-[5px] flex flex-col gap-[3px] px-0.5">
          {['Quaternion', 'Freeze Transformation'].map((t) => (
            <button key={t} type="button" className="flex h-[17px] items-center gap-1 bg-[#4c4c4c] pl-3 text-[#cacaca]">
              <svg viewBox="0 0 5 8" className="h-2 w-[5px]"><polygon points="0,0 5,4 0,8" fill="#d0d0d0" /></svg>
              {t}
            </button>
          ))}
        </div>
      </div>
      <SideTabs tabs={['Attributes', 'Layers', 'Structure']} />
    </section>
  );
}

/* ---------- page ---------- */

export default function App() {
  return (
    <div className="flex h-screen flex-col overflow-hidden bg-[#3d3d3d] font-['Noto_Sans_CJK_KR',sans-serif] text-[11px] leading-4 whitespace-nowrap">
      <TitleBar />
      <MenuBar />
      <div className="flex min-h-0 flex-1">
        <main className="flex min-w-0 flex-1 flex-col">
          <div className="flex h-11 shrink-0 items-start pt-1.5">
            <Grip className="mt-[3px] mr-0.5 h-7 w-[7px]" />
            {mainTools.map((g, i) => (
              <div key={i} className={g.gap ? 'ml-[11px]' : i === 0 ? '' : 'ml-[3px]'}>
                <ToolGroup items={g.items} size="h-[34px] w-[35px]" />
              </div>
            ))}
          </div>

          <div className="flex min-h-0 flex-1">
            <div className="flex w-[39px] shrink-0 flex-col pt-px pl-px">
              <Grip className="ml-[3px] h-[5px] w-7" />
              {sideTools.map((g, i) => (
                <div key={i} className={`w-[34px] ${g.gap ? 'mt-[11px]' : 'mt-[3px]'}`}>
                  <ToolGroup items={g.items} size="h-[35px] w-[34px]" vertical />
                </div>
              ))}
            </div>

            <div className="flex min-w-0 flex-1 flex-col">
              <Viewport />
              <Timeline />
              <PlaybackBar />
              <div className="flex h-[138px] shrink-0 gap-[3px]">
                <MaterialPanel />
                <CoordinatePanel />
              </div>
            </div>
          </div>

          <footer className="mt-[3px] flex h-6 shrink-0 items-center gap-[11px] border-t border-l border-[#4b4b4b] pl-1 text-[#bebebe]">
            <Burger />
            <p className="pb-0.5">Move: Click and drag to move elements. Hold down SHIFT to quantize movement / add to the selection in point mode, CTRL to remove.</p>
          </footer>
        </main>

        <aside className="mt-[5px] ml-1 flex w-[516px] shrink-0 flex-col bg-[linear-gradient(to_left,#363636_23px,#3d3d3d_23px)]">
          <ObjectManager />
          <AttributeManager />
        </aside>
      </div>
    </div>
  );
}
